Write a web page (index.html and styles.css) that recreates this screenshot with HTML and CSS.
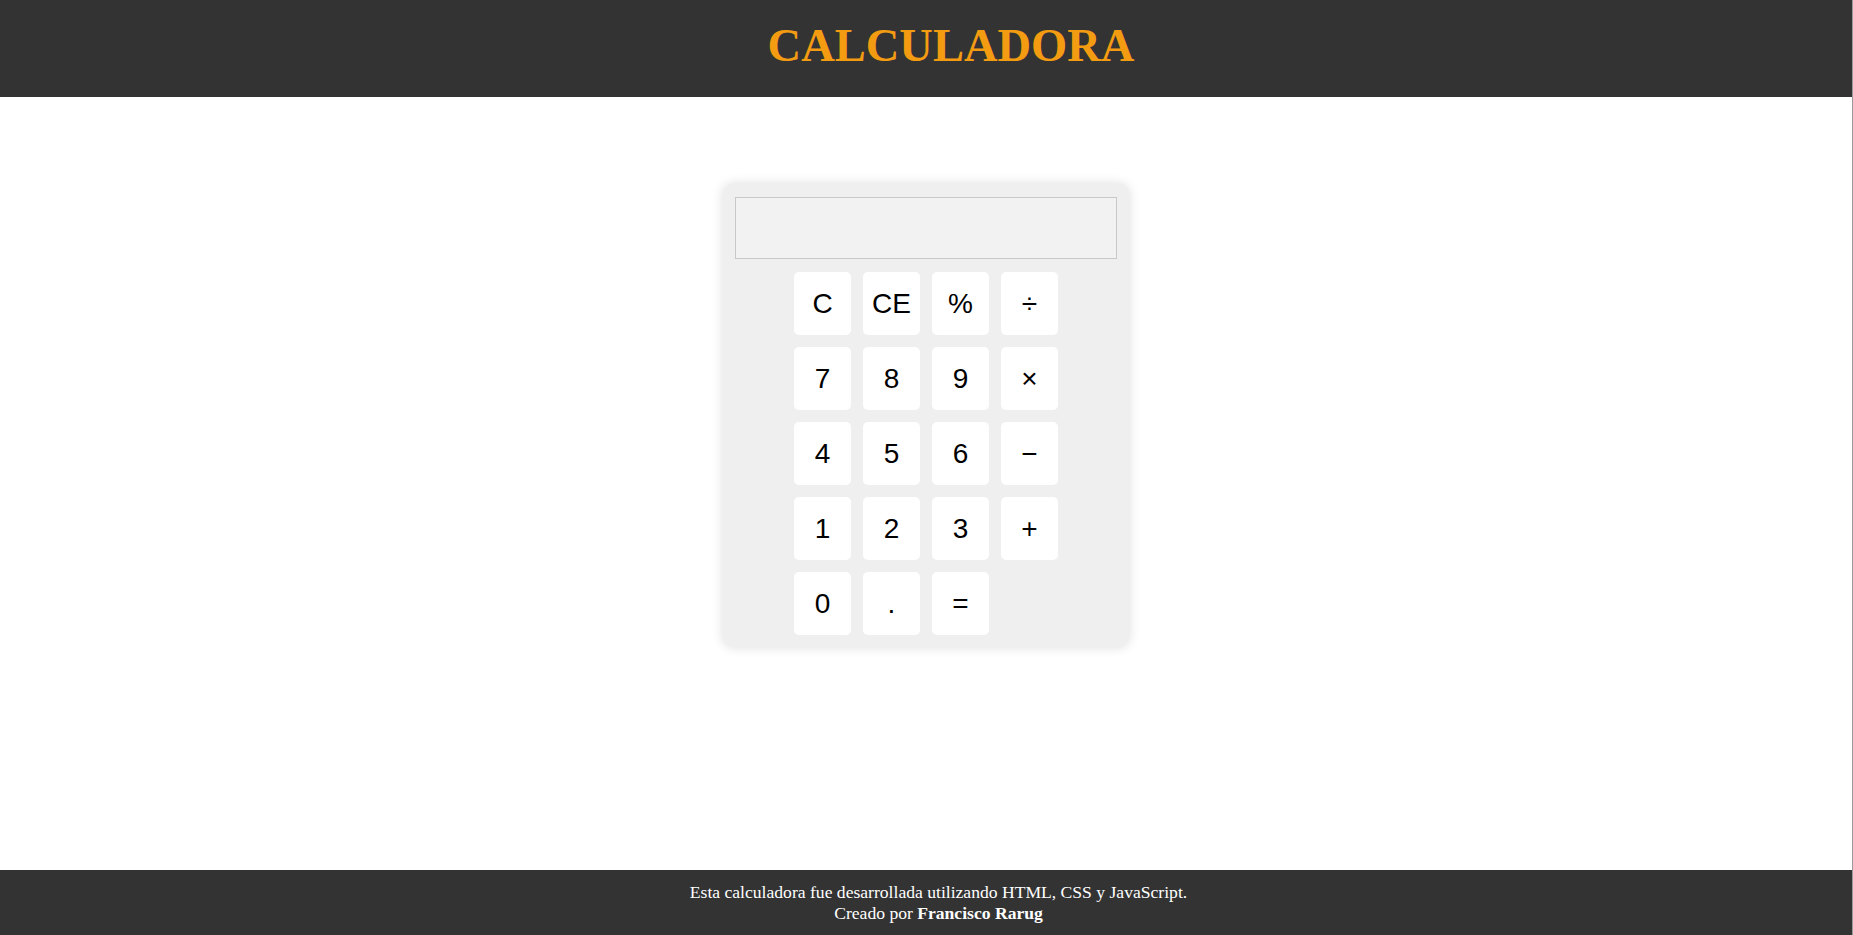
FILE: index.html
```html
<!DOCTYPE html>
<html lang="es">
<head>
<meta charset="utf-8">
<title>Calculadora</title>
<link rel="stylesheet" href="styles.css">
</head>
<body>
<header class="site-header">
  <h1 class="title">CALCULADORA</h1>
</header>
<main class="main">
  <div class="calculator">
    <div class="display"></div>
    <div class="keys">
      <button class="key">C</button>
      <button class="key">CE</button>
      <button class="key">%</button>
      <button class="key">÷</button>
      <button class="key">7</button>
      <button class="key">8</button>
      <button class="key">9</button>
      <button class="key">×</button>
      <button class="key">4</button>
      <button class="key">5</button>
      <button class="key">6</button>
      <button class="key">−</button>
      <button class="key">1</button>
      <button class="key">2</button>
      <button class="key">3</button>
      <button class="key">+</button>
      <button class="key">0</button>
      <button class="key">.</button>
      <button class="key">=</button>
    </div>
  </div>
</main>
<footer class="site-footer">
  <p class="footer-line">Esta calculadora fue desarrollada utilizando HTML, CSS y JavaScript.</p>
  <p class="footer-line">Creado por <strong>Francisco Rarug</strong></p>
</footer>
</body>
</html>
```

FILE: styles.css
```css
html, body {
  margin: 0;
  padding: 0;
}

html {
  border-right: 1px solid #9a9a9a;
}

body {
  min-height: 100vh;
  display: flex;
  flex-direction: column;
  background: #ffffff;
  font-family: "Liberation Serif", "Times New Roman", serif;
}

.site-header {
  height: 97px;
  background: #333333;
  display: flex;
  align-items: center;
  justify-content: center;
}

.title {
  margin: 0;
  padding: 0 0 6px 50px;
  font-family: "Liberation Serif", "Times New Roman", serif;
  font-weight: bold;
  font-size: 46.5px;
  line-height: 1.15;
  color: #f39c12;
}

.main {
  flex: 1;
  display: flex;
  justify-content: center;
  align-items: flex-start;
  padding-top: 87px;
}

.calculator {
  width: 382px;
  padding: 13px 12px 12px 12px;
  background: #efefef;
  border-radius: 10px;
  box-shadow: 0 0 12px rgba(0, 0, 0, 0.14);
  display: flex;
  flex-direction: column;
  gap: 13px;
}

.display {
  height: 60px;
  background: #f2f2f2;
  border: 1px solid #c8c8c8;
}

.keys {
  display: grid;
  grid-template-columns: repeat(4, 57px);
  grid-auto-rows: 63px;
  gap: 12px;
  justify-content: center;
}

.key {
  border: none;
  border-radius: 5px;
  background: #ffffff;
  color: #000000;
  font-family: "Liberation Sans", Arial, sans-serif;
  font-size: 28px;
  padding: 0;
  display: flex;
  align-items: center;
  justify-content: center;
}

.site-footer {
  height: 65px;
  box-sizing: border-box;
  background: #333333;
  color: #ffffff;
  text-align: center;
  padding: 12px 0 11px 25px;
  font-size: 17.6px;
}

.footer-line {
  margin: 0;
  line-height: 21px;
}
```
